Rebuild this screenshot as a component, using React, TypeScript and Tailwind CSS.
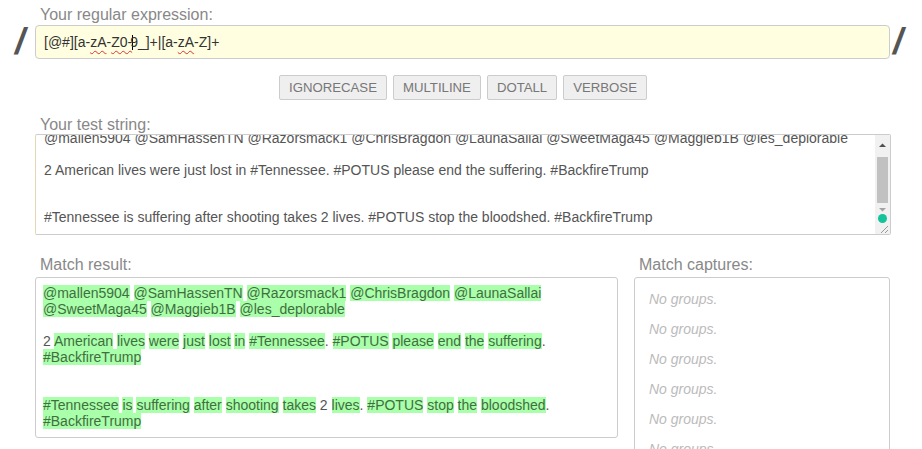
import React from 'react'

const FLAGS = ['IGNORECASE', 'MULTILINE', 'DOTALL', 'VERBOSE']

const TEST_TEXT =
  '@mallen5904 @SamHassenTN @Razorsmack1 @ChrisBragdon @LaunaSallai @SweetMaga45 @Maggieb1B @les_deplorable\n\n' +
  '2 American lives were just lost in #Tennessee. #POTUS please end the suffering. #BackfireTrump\n\n\n' +
  '#Tennessee is suffering after shooting takes 2 lives. #POTUS stop the bloodshed. #BackfireTrump'

const PATTERN = /[@#][a-zA-Z0-9_]+|[a-zA-Z]+/g

function highlight(text: string) {
  const out: React.ReactNode[] = []
  let last = 0
  let m: RegExpExecArray | null
  let k = 0
  PATTERN.lastIndex = 0
  while ((m = PATTERN.exec(text)) !== null) {
    if (m.index > last) out.push(text.slice(last, m.index))
    out.push(
      <span key={k++} className="bg-[#aaffaa] text-[#3f6f3f]">
        {m[0]}
      </span>
    )
    last = m.index + m[0].length
  }
  if (last < text.length) out.push(text.slice(last))
  return out
}

function Label({ children, className = '' }: { children: React.ReactNode; className?: string }) {
  return <div className={`text-[16px] leading-[18px] text-[#888] ${className}`}>{children}</div>
}

const Squiggle = ({ children }: { children: React.ReactNode }) => (
  <span className="underline decoration-wavy decoration-[#e03030] decoration-1 underline-offset-[3px]">{children}</span>
)

export default function App() {
  return (
    <div className="w-[922px] h-[449px] overflow-hidden bg-white font-['Liberation_Sans',Arial,sans-serif]">
      {/* regex input */}
      <Label className="pl-[40px] pt-[6px]">Your regular expression:</Label>
      <div className="flex items-center mt-[1px]">
        <div className="w-[35px] flex justify-start pl-[15px] text-[36px] leading-[34px] font-bold italic text-[#555]">/</div>
        <div className="w-[855px] h-[34px] rounded-[4px] border border-[#ccc] bg-[#fffee0] px-[8px] flex items-center text-[14px] text-[#333]">
          <span className="whitespace-pre">
            [@#][a-<Squiggle>zA</Squiggle>-<Squiggle>Z0-</Squiggle>
            <span className="inline-block w-px h-[15px] bg-black align-middle -mr-[3px]" />9_]+|[a-<Squiggle>zA</Squiggle>-Z]+
          </span>
        </div>
        <div className="w-[32px] flex justify-start pl-[3px] text-[36px] leading-[34px] font-bold italic text-[#555]">/</div>
      </div>

      {/* flags */}
      <div className="flex justify-center gap-[6px] mt-[16px] pl-[4px]">
        {FLAGS.map((f) => (
          <button
            key={f}
            className="h-[25px] px-[9px] rounded-[2px] border border-[#ccc] bg-[#efefef] text-[13.2px] text-[#777] leading-none"
          >
            {f}
          </button>
        ))}
      </div>

      {/* test string */}
      <Label className="pl-[40px] mt-[16px]">Your test string:</Label>
      <div className="relative ml-[35px] w-[856px] h-[101px] border border-[#ccc] border-l-[#e0d8b0] rounded-[2px] flex overflow-hidden">
        <div className="flex-1 overflow-hidden px-[8px]">
          <div className="-mt-[4px] whitespace-pre-wrap text-[14px] leading-[15.8px] text-[#555]">{TEST_TEXT}</div>
        </div>
        {/* scrollbar */}
        <div className="w-[15px] bg-[#f1f1f1] flex flex-col items-center">
          <svg width="15" height="17" viewBox="0 0 15 17" className="mt-[4px]">
            <path d="M4 8 L7.5 4.5 L11 8 Z" fill="#505050" />
          </svg>
          <div className="w-[11px] h-[46px] bg-[#c1c1c1] mt-[1px]" />
          <svg width="15" height="12" viewBox="0 0 15 12" className="mt-[1px]">
            <path d="M4 4 L11 4 L7.5 7.5 Z" fill="#a3a3a3" />
          </svg>
          <div className="flex-1" />
          <svg width="15" height="12" viewBox="0 0 15 12">
            <path d="M6 11 L13 4 M10 11 L13 8" stroke="#999" strokeWidth="1" />
          </svg>
        </div>
        <span className="absolute right-[3px] top-[79px] w-[9px] h-[9px] rounded-full bg-[#15c39a]" />
      </div>

      {/* results */}
      <div className="flex mt-[21px] ml-[35px] gap-[16px]">
        <div className="w-[583px]">
          <Label className="pl-[5px]">Match result:</Label>
          <div className="mt-[3px] h-[161px] border border-[#ccc] rounded-[3px] px-[7px] pt-[7px] overflow-hidden">
            <div className="whitespace-pre-wrap text-[14px] leading-[16px] text-[#555]">{highlight(TEST_TEXT)}</div>
          </div>
        </div>
        <div className="w-[256px]">
          <Label className="pl-[5px]">Match captures:</Label>
          <div className="mt-[3px] h-[200px] border border-[#ccc] rounded-[3px] pl-[14px] pt-[13px] flex flex-col gap-[14px]">
            {Array.from({ length: 6 }).map((_, i) => (
              <div key={i} className="text-[14px] leading-[16px] italic text-[#bbb]">
                No groups.
              </div>
            ))}
          </div>
        </div>
      </div>
    </div>
  )
}
